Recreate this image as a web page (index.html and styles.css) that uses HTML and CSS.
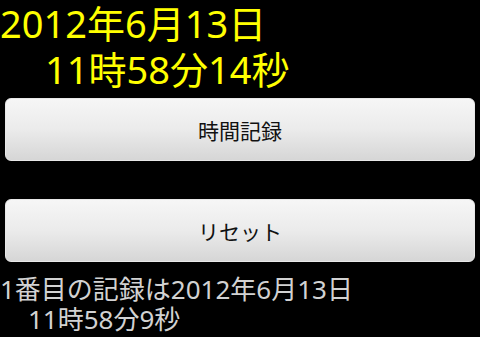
FILE: index.html
```html
<!DOCTYPE html>
<html>
    <head>
        <title>時間記録</title>
        <link rel="stylesheet" href="styles.css">
    </head>
    <body>
        <div class='clock'>2012年6月13日<br><span class='clock-time'>11時58分14秒</span></div>
        <div class='buttons'>
            <button class='btn' id='recordbtn'>時間記録</button>
            <button class='btn' id='resetbtn'>リセット</button>
        </div>
        <div class='log'>1番目の記録は2012年6月13日<br><span class='log-time'>11時58分9秒</span></div>
    </body>
</html>
```

FILE: styles.css
```css
body{
    margin: 0;
    background-color: #000;
    overflow: hidden;
    font-family: "Noto Sans", "Noto Sans CJK JP", sans-serif;
}
.clock{
    color: #ffff00;
    font-size: 38px;
    line-height: 46px;
}
.clock-time{
    padding-left: 45px;
}
.buttons{
    display: flex;
    flex-direction: column;
    gap: 38px;
    padding: 0 5px;
    margin-top: 6px;
}
.btn{
    height: 63px;
    border: 1px solid #e8e8e8;
    border-radius: 6px;
    background: linear-gradient(#f6f6f6, #ebebeb 50%, #d6d6d6);
    color: #111;
    font-family: "Noto Sans CJK JP", sans-serif;
    font-size: 21px;
}
.log{
    color: #d2d2d2;
    font-size: 26px;
    line-height: 30px;
    margin-top: 12px;
}
.log-time{
    padding-left: 28px;
}
```
